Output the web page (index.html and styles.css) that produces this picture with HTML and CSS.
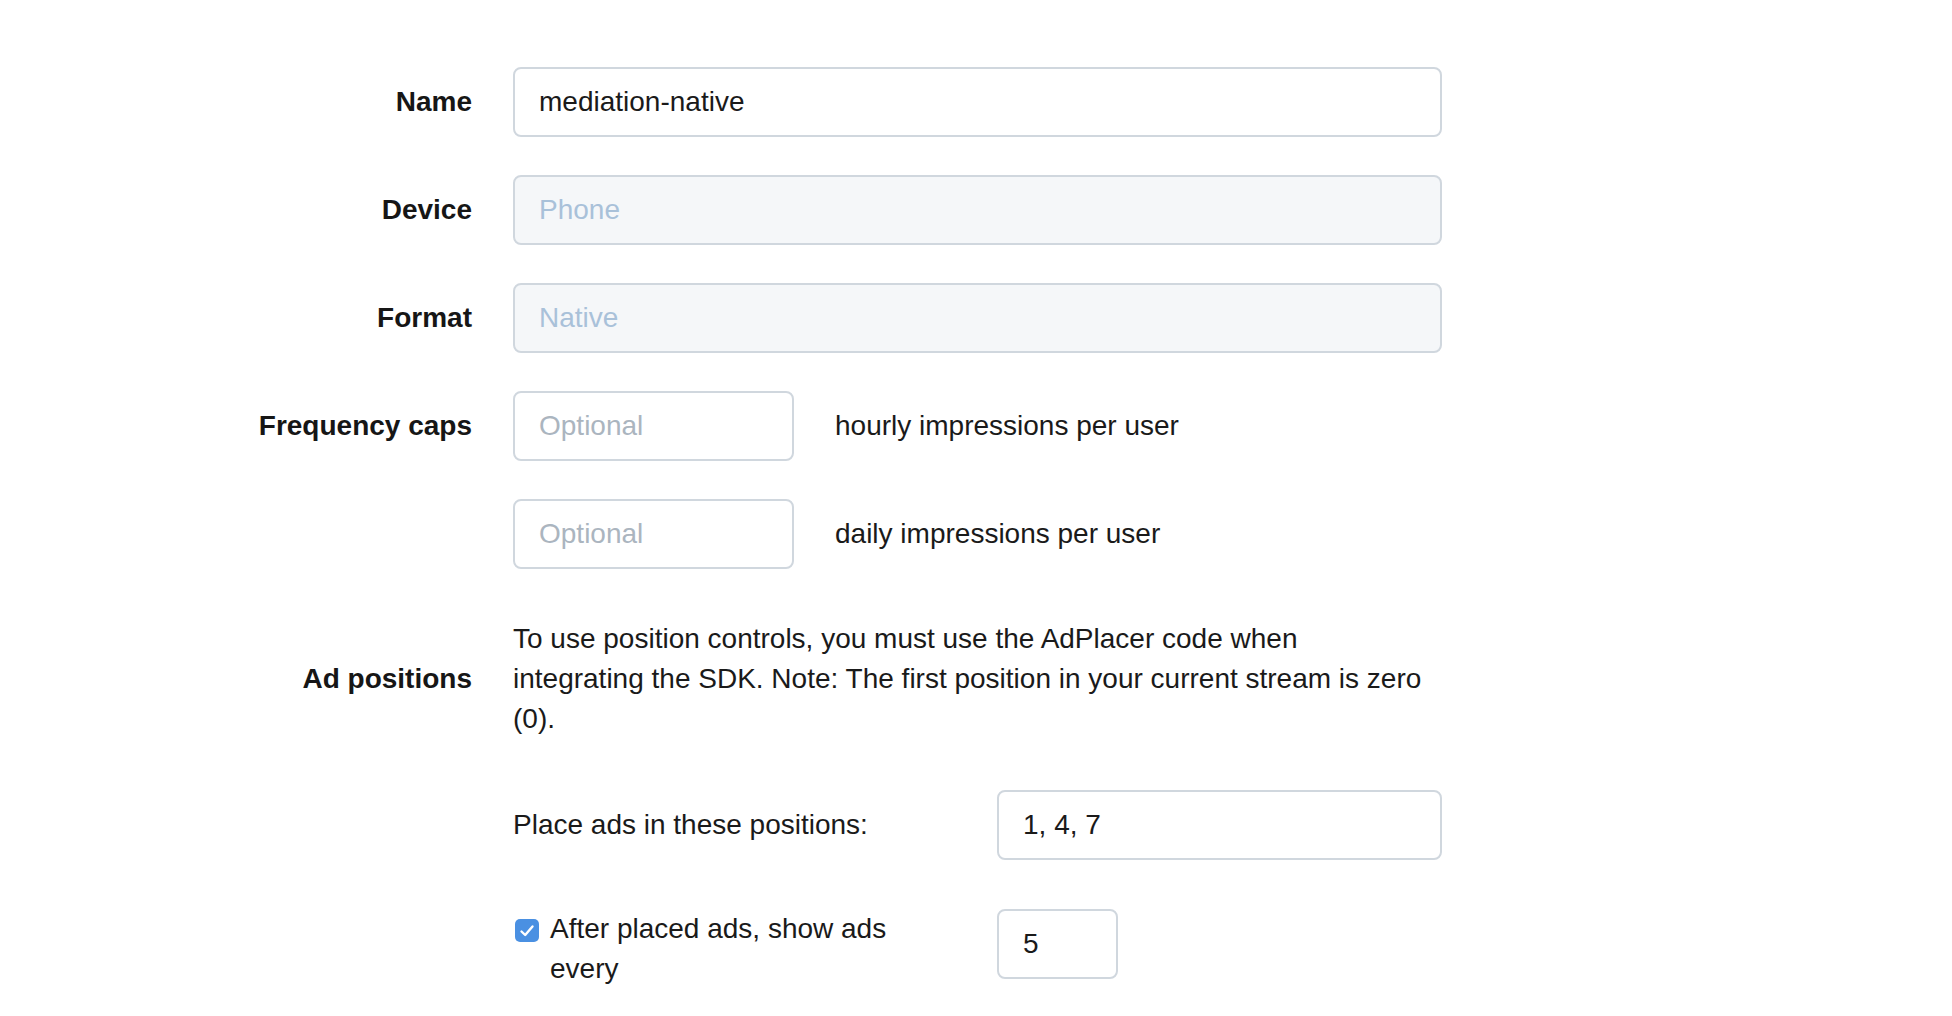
FILE: index.html
```html
<!DOCTYPE html>
<html lang="en">
<head>
<meta charset="utf-8">
<title>Ad unit settings</title>
<link rel="stylesheet" href="styles.css">
</head>
<body>
<form class="form">
  <div class="row">
    <label class="lbl" for="name">Name</label>
    <div class="field"><input id="name" class="input" type="text" value="mediation-native"></div>
  </div>
  <div class="row">
    <label class="lbl" for="device">Device</label>
    <div class="field"><input id="device" class="input" type="text" placeholder="Phone" disabled></div>
  </div>
  <div class="row">
    <label class="lbl" for="format">Format</label>
    <div class="field"><input id="format" class="input" type="text" placeholder="Native" disabled></div>
  </div>
  <div class="row">
    <label class="lbl" for="hourly">Frequency caps</label>
    <div class="field inline">
      <input id="hourly" class="input small" type="text" placeholder="Optional">
      <span class="hint">hourly impressions per user</span>
    </div>
  </div>
  <div class="row">
    <span class="lbl"></span>
    <div class="field inline">
      <input class="input small" type="text" placeholder="Optional">
      <span class="hint">daily impressions per user</span>
    </div>
  </div>
  <div class="row row-ad">
    <span class="lbl">Ad positions</span>
    <p class="note">To use position controls, you must use the AdPlacer code when integrating the SDK. Note: The first position in your current stream is zero (0).</p>
  </div>
  <div class="row row-place">
    <span class="lbl"></span>
    <div class="field sub">
      <span class="sub-text">Place ads in these positions:</span>
      <input class="input" type="text" value="1, 4, 7">
    </div>
  </div>
  <div class="row row-every">
    <span class="lbl"></span>
    <div class="field sub top">
      <label class="check">
        <span class="box"><svg width="16" height="14" viewBox="0 0 16 14"><path d="M2.5 7.5 L6.2 11 L13.5 2.5" fill="none" stroke="#fff" stroke-width="2.4" stroke-linecap="round" stroke-linejoin="round"/></svg></span>
        <span class="check-text">After placed ads, show ads every</span>
      </label>
      <input class="input tiny" type="text" value="5">
    </div>
  </div>
</form>
</body>
</html>
```

FILE: styles.css
```css
* { box-sizing: border-box; }

body {
  margin: 0;
  background: #ffffff;
  font-family: "Liberation Sans", Arial, Helvetica, sans-serif;
  font-size: 28px;
  line-height: 40px;
  color: #1a1a1a;
}

.form {
  display: flex;
  flex-direction: column;
  gap: 38px;
  padding-top: 67px;
}

.row {
  display: flex;
  align-items: center;
  gap: 41px;
}

.lbl {
  width: 472px;
  flex: none;
  text-align: right;
  font-weight: bold;
  color: #161616;
}

.field {
  width: 929px;
  flex: none;
}

.input {
  display: block;
  width: 100%;
  height: 70px;
  padding: 0 24px;
  border: 2px solid #d0d7de;
  border-radius: 8px;
  background: #ffffff;
  font-family: inherit;
  font-size: 28px;
  color: #1a1a1a;
  outline: none;
}

.input::placeholder { color: #abb5bf; }

.input:disabled {
  background: #f5f7f9;
}

.input:disabled::placeholder { color: #a9c1d9; }

.inline {
  display: flex;
  align-items: center;
  gap: 41px;
}

.input.small { width: 281px; }

.hint { color: #1a1a1a; }

.row-ad { margin-top: 12px; }

.note {
  margin: 0;
  width: 915px;
}

.row-place { margin-top: 13px; }
.row-every { margin-top: 11px; }

.sub {
  display: flex;
  align-items: center;
}

.sub.top { align-items: flex-start; }

.sub-text, .check {
  width: 484px;
  flex: none;
}

.sub .input { flex: none; width: 445px; }
.sub .input.tiny { width: 121px; }

.check {
  display: flex;
  align-items: flex-start;
  gap: 11px;
  padding-left: 2px;
  padding-right: 60px;
}

.box {
  flex: none;
  width: 24px;
  height: 23px;
  margin-top: 10px;
  border-radius: 5px;
  background: #4a90e2;
  display: flex;
  align-items: center;
  justify-content: center;
}
```
